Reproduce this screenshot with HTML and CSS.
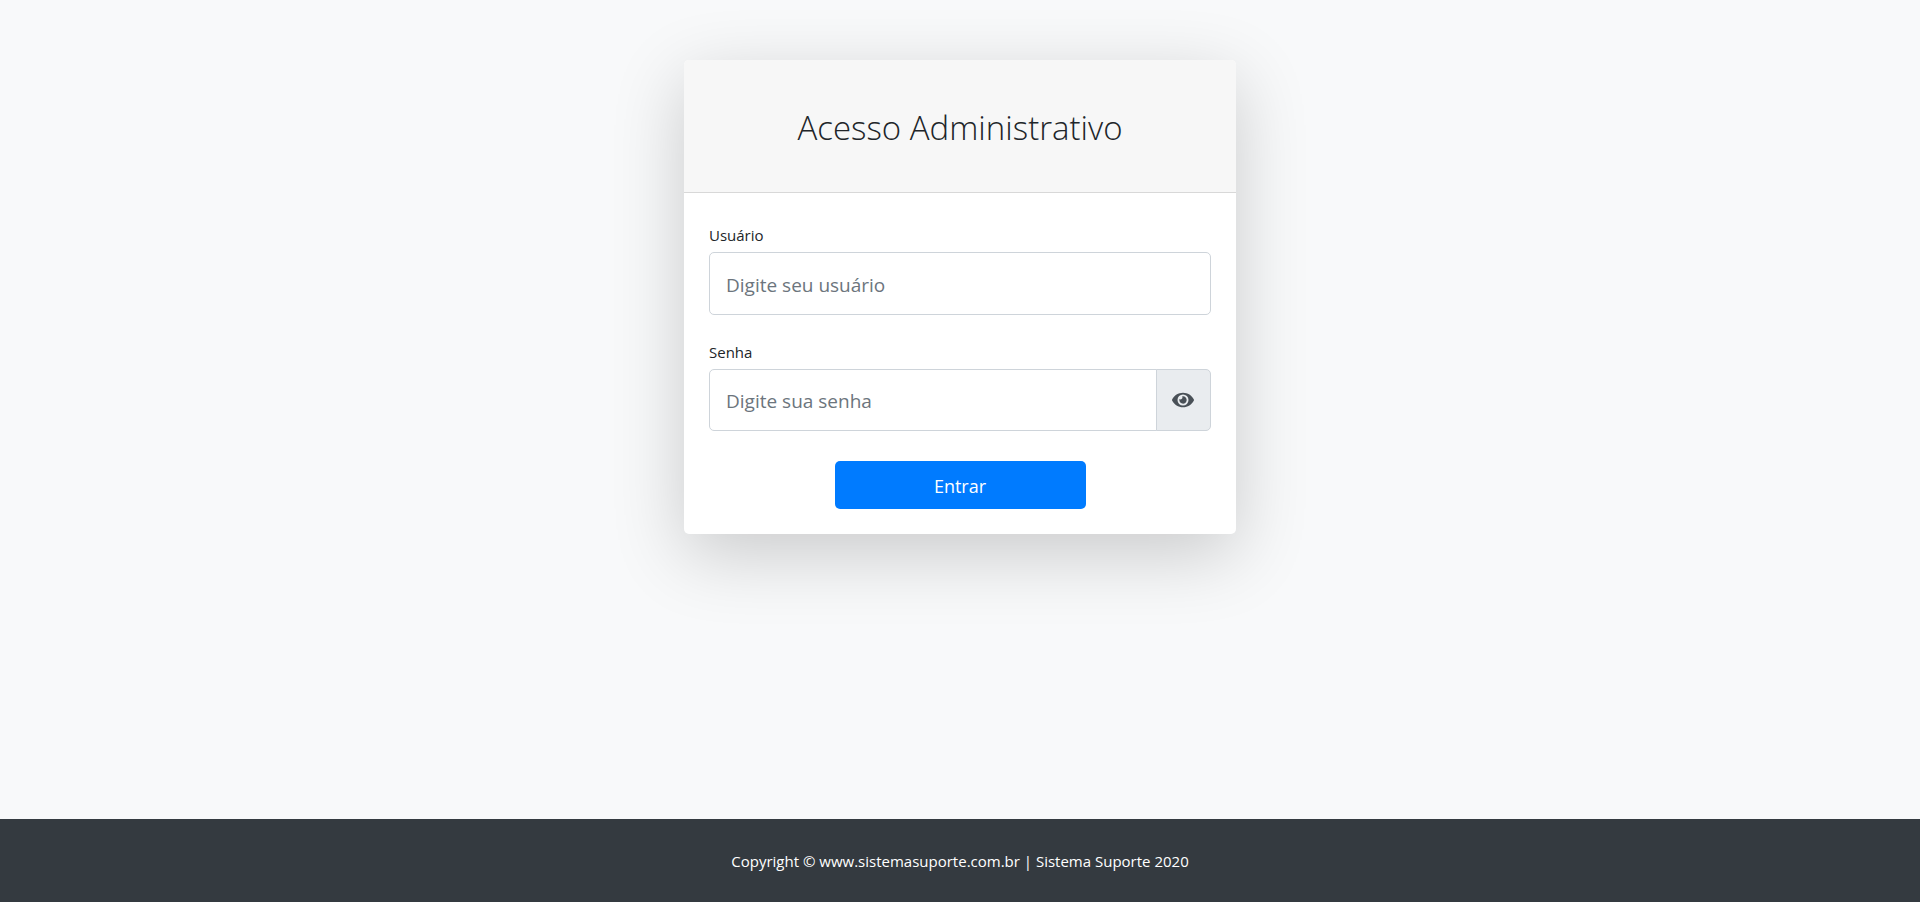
FILE: index.html
```html
<!DOCTYPE html>
<html lang="pt-BR">
<head>
<meta charset="utf-8">
<title>Acesso Administrativo</title>
<link rel="stylesheet" href="styles.css">
</head>
<body>
<main class="page">
  <div class="card">
    <div class="card-header"><h1 class="title">Acesso Administrativo</h1></div>
    <form class="card-body">
      <div class="form-group">
        <label class="label" for="user">Usuário</label>
        <input class="input" id="user" type="text" placeholder="Digite seu usuário">
      </div>
      <div class="form-group">
        <label class="label" for="password">Senha</label>
        <div class="input-group">
          <input class="input input-joined" id="password" type="password" placeholder="Digite sua senha">
          <button class="addon" type="button" aria-label="Mostrar senha">
            <svg class="eye" viewBox="0 0 576 512" aria-hidden="true"><path fill="currentColor" d="M572.52 241.4C518.29 135.59 410.93 64 288 64S57.68 135.64 3.48 241.41a32.35 32.35 0 0 0 0 29.19C57.71 376.41 165.07 448 288 448s230.32-71.64 284.52-177.41a32.35 32.35 0 0 0 0-29.19zM288 400a144 144 0 1 1 144-144 143.93 143.93 0 0 1-144 144zm0-240a95.31 95.31 0 0 0-25.31 3.79 47.85 47.85 0 0 1-66.9 66.9A95.78 95.78 0 1 0 288 160z"/></svg>
          </button>
        </div>
      </div>
      <button class="submit" type="submit">Entrar</button>
    </form>
  </div>
</main>
<footer class="footer">Copyright © www.sistemasuporte.com.br | Sistema Suporte 2020</footer>
</body>
</html>
```
FILE: styles.css
```css
* { box-sizing: border-box; }
body {
  margin: 0;
  min-height: 100vh;
  display: flex;
  flex-direction: column;
  background: #f8f9fa;
  color: #212529;
  font: 15px/24px "Open Sans", sans-serif;
}
.page { flex: 1; padding: 60px 16px; }
.card {
  max-width: 552px;
  margin: 0 auto;
  background: #fff;
  border-radius: 5px;
  box-shadow: 0 20px 72px rgba(0, 0, 0, .19);
}
.card-header {
  padding: 46px 24px 42px;
  background: #f7f7f7;
  border-bottom: 1px solid #d8d8d8;
  border-radius: 5px 5px 0 0;
}
.title { margin: 0; font-size: 33px; line-height: 44px; font-weight: 300; text-align: center; }
.card-body { padding: 30px 25px 25px; }
.form-group { margin-bottom: 25px; }
.label { display: block; margin-bottom: 5px; }
.input {
  display: block;
  width: 100%;
  height: 63px;
  padding: 2px 16px 0;
  border: 1px solid #ced4da;
  border-radius: 5px;
  background: #fff;
  color: #495057;
  font: inherit;
  font-size: 19px;
}
.input::placeholder { color: #6c757d; opacity: 1; }
.input-group { display: flex; height: 62px; }
.input-joined { flex: 1; height: 100%; border-radius: 5px 0 0 5px; }
.addon {
  display: flex;
  align-items: center;
  justify-content: center;
  width: 55px;
  margin-left: -1px;
  padding: 0 1px 0 0;
  border: 1px solid #ced4da;
  border-radius: 0 5px 5px 0;
  background: #e9ecef;
  color: #495057;
}
.eye { width: 22px; height: 20px; }
.submit {
  display: block;
  width: 50%;
  height: 48px;
  margin: 30px auto 0;
  padding: 2px 0 0;
  border: 0;
  border-radius: 5px;
  background: #007bff;
  color: #fff;
  font: inherit;
  font-size: 18px;
}
.footer { padding: 30px 16px 29px; background: #343a40; color: #fff; text-align: center; }
```
